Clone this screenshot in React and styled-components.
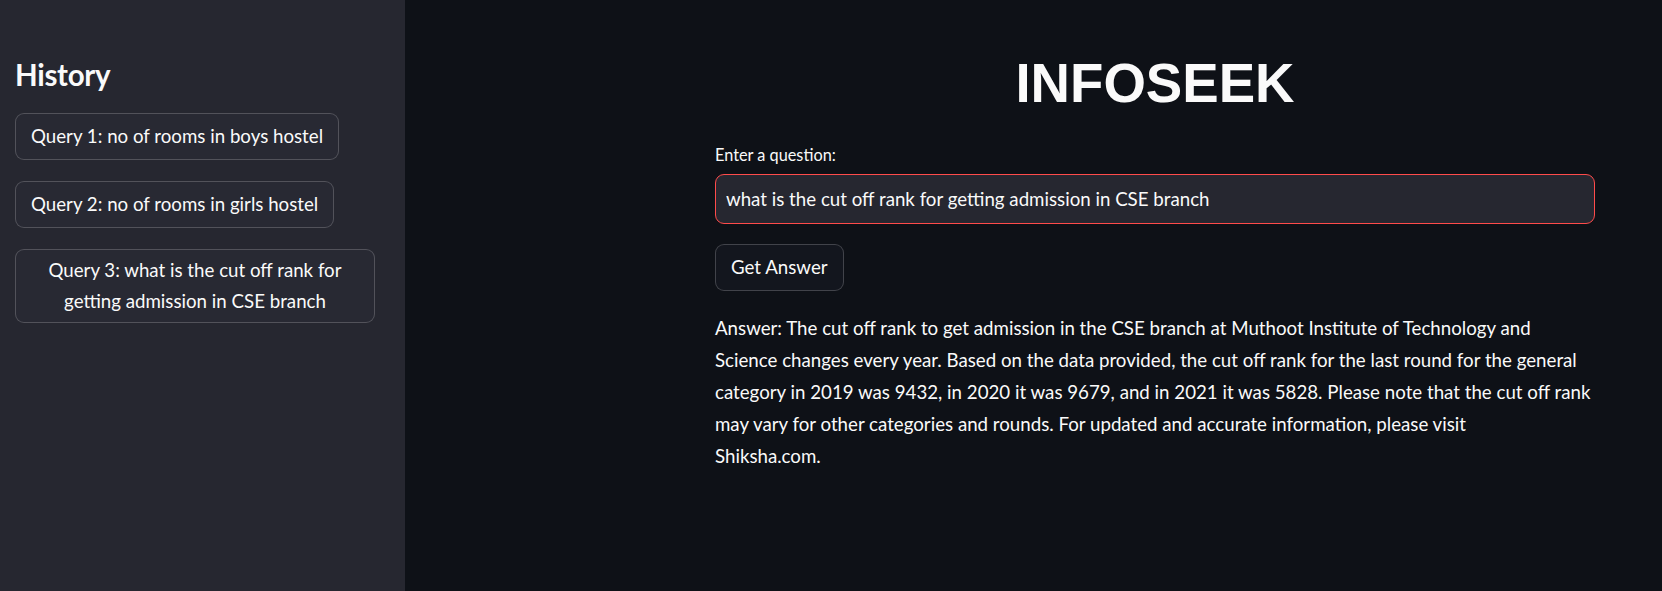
import React from "react";
import styled, { createGlobalStyle } from "styled-components";

const Global = createGlobalStyle`
  html, body { margin: 0; padding: 0; background: #0e1117; }
  body { font-family: Lato, "Noto Sans", sans-serif; color: #fafafa; }
  * { box-sizing: border-box; }
`;

const Shell = styled.div`
  display: flex;
  width: 100%;
  height: 591px;
  overflow: hidden;
`;

const Sidebar = styled.aside`
  width: 405px;
  flex: none;
  background: #262730;
  padding: 57px 30px 0 15px;
  display: flex;
  flex-direction: column;
  align-items: flex-start;
`;

const SideTitle = styled.h2`
  margin: 0 0 21px 0;
  font-size: 29.5px;
  font-weight: 700;
  line-height: 1.2;
  letter-spacing: -0.3px;
`;

const HistoryList = styled.div`
  display: flex;
  flex-direction: column;
  align-items: flex-start;
  gap: 21px;
  width: 100%;
`;

const Button = styled.button`
  font-family: inherit;
  font-size: 18.7px;
  line-height: 31px;
  color: #fafafa;
  background: ${(p) => (p.$side ? "#282933" : "#13161e")};
  border: 1px solid rgba(250, 250, 250, 0.2);
  border-radius: 9px;
  min-height: 47px;
  padding: 5px 15px;
  text-align: center;
  max-width: 100%;
  cursor: pointer;
`;

const Main = styled.main`
  flex: 1;
  padding: 52px 0 0 310px;
`;

const Column = styled.div`
  width: 880px;
  display: flex;
  flex-direction: column;
`;

const Title = styled.h1`
  margin: 0 0 28px 0;
  text-align: center;
  font-family: "Liberation Sans", Arial, sans-serif;
  font-weight: 700;
  font-size: 54.6px;
  line-height: 64px;
`;

const Label = styled.label`
  font-size: 16.3px;
  line-height: 22px;
  margin-bottom: 8px;
`;

const Input = styled.input`
  width: 100%;
  height: 50px;
  background: #262730;
  border: 1px solid #ff4b4b;
  border-radius: 9px;
  color: #fafafa;
  font-family: inherit;
  font-size: 18.7px;
  padding: 0 10px;
  outline: none;
  margin-bottom: 20px;
`;

const Answer = styled.p`
  margin: 21px 0 0 0;
  font-size: 18.7px;
  line-height: 32px;
`;

const history = [
  "Query 1: no of rooms in boys hostel",
  "Query 2: no of rooms in girls hostel",
  "Query 3: what is the cut off rank for getting admission in CSE branch",
];

export default function App() {
  return (
    <>
      <Global />
      <Shell>
        <Sidebar>
          <SideTitle>History</SideTitle>
          <HistoryList>
            {history.map((h) => (
              <Button $side key={h}>
                {h}
              </Button>
            ))}
          </HistoryList>
        </Sidebar>
        <Main>
          <Column>
            <Title>INFOSEEK</Title>
            <Label>Enter a question:</Label>
            <Input
              defaultValue="what is the cut off rank for getting admission in CSE branch"
              readOnly
            />
            <div>
              <Button>Get Answer</Button>
            </div>
            <Answer>
              Answer: The cut off rank to get admission in the CSE branch at Muthoot Institute of
              Technology and Science changes every year. Based on the data provided, the cut off
              rank for the last round for the general category in 2019 was 9432, in 2020 it was
              9679, and in 2021 it was 5828. Please note that the cut off rank may vary for other
              categories and rounds. For updated and accurate information, please visit
              <br />
              Shiksha.com.
            </Answer>
          </Column>
        </Main>
      </Shell>
    </>
  );
}
